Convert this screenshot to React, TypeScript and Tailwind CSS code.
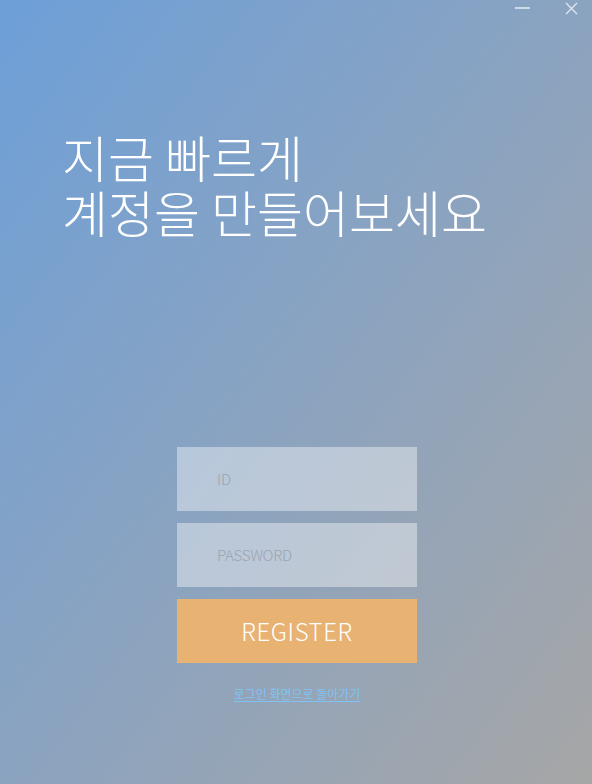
import React from "react";

export default function App() {
  return (
    <div
      className="relative w-[592px] h-[784px] overflow-hidden bg-gradient-to-br from-[#6d9fd8] to-[#a6a6a6]"
      style={{ fontFamily: '"Noto Sans CJK KR", "Noto Sans", sans-serif' }}
    >
      <div className="absolute top-0 right-0 flex items-start gap-[35px] pr-[14px] pt-[2px]">
        <button className="w-[15px] h-[12px] flex items-start pt-[5px]">
          <span className="block w-[15px] h-[2px] bg-white/60" />
        </button>
        <button className="w-[13px] h-[13px] flex">
          <svg width="13" height="13" viewBox="0 0 13 13">
            <path d="M1 1L12 12M12 1L1 12" stroke="rgba(255,255,255,0.75)" strokeWidth="1.3" />
          </svg>
        </button>
      </div>

      <div className="pt-[129px] pl-[62px]">
        <h1 className="text-[50px] leading-[55px] font-light text-white">
          <span className="block">지금 빠르게</span>
          <span className="block">계정을 만들어보세요</span>
        </h1>
      </div>

      <div className="mt-[208px] flex flex-col items-center pl-[2px]">
        <div className="w-[240px] flex flex-col gap-[12px]">
          <div className="h-[64px] bg-white/40 flex items-center pl-[40px]">
            <span className="text-[15px] font-light text-[#9aa4b2]">ID</span>
          </div>
          <div className="h-[64px] bg-white/40 flex items-center pl-[40px]">
            <span className="text-[15px] font-light text-[#9aa4b2] tracking-[-0.3px]">PASSWORD</span>
          </div>
          <div className="h-[64px] bg-[#e8b273] flex items-center justify-center">
            <span className="text-[24px] font-light text-white tracking-[0.6px]">REGISTER</span>
          </div>
        </div>
        <a className="mt-[22px] text-[12px] text-[#7fc3f6] underline underline-offset-2">로그인 화면으로 돌아가기</a>
      </div>
    </div>
  );
}
